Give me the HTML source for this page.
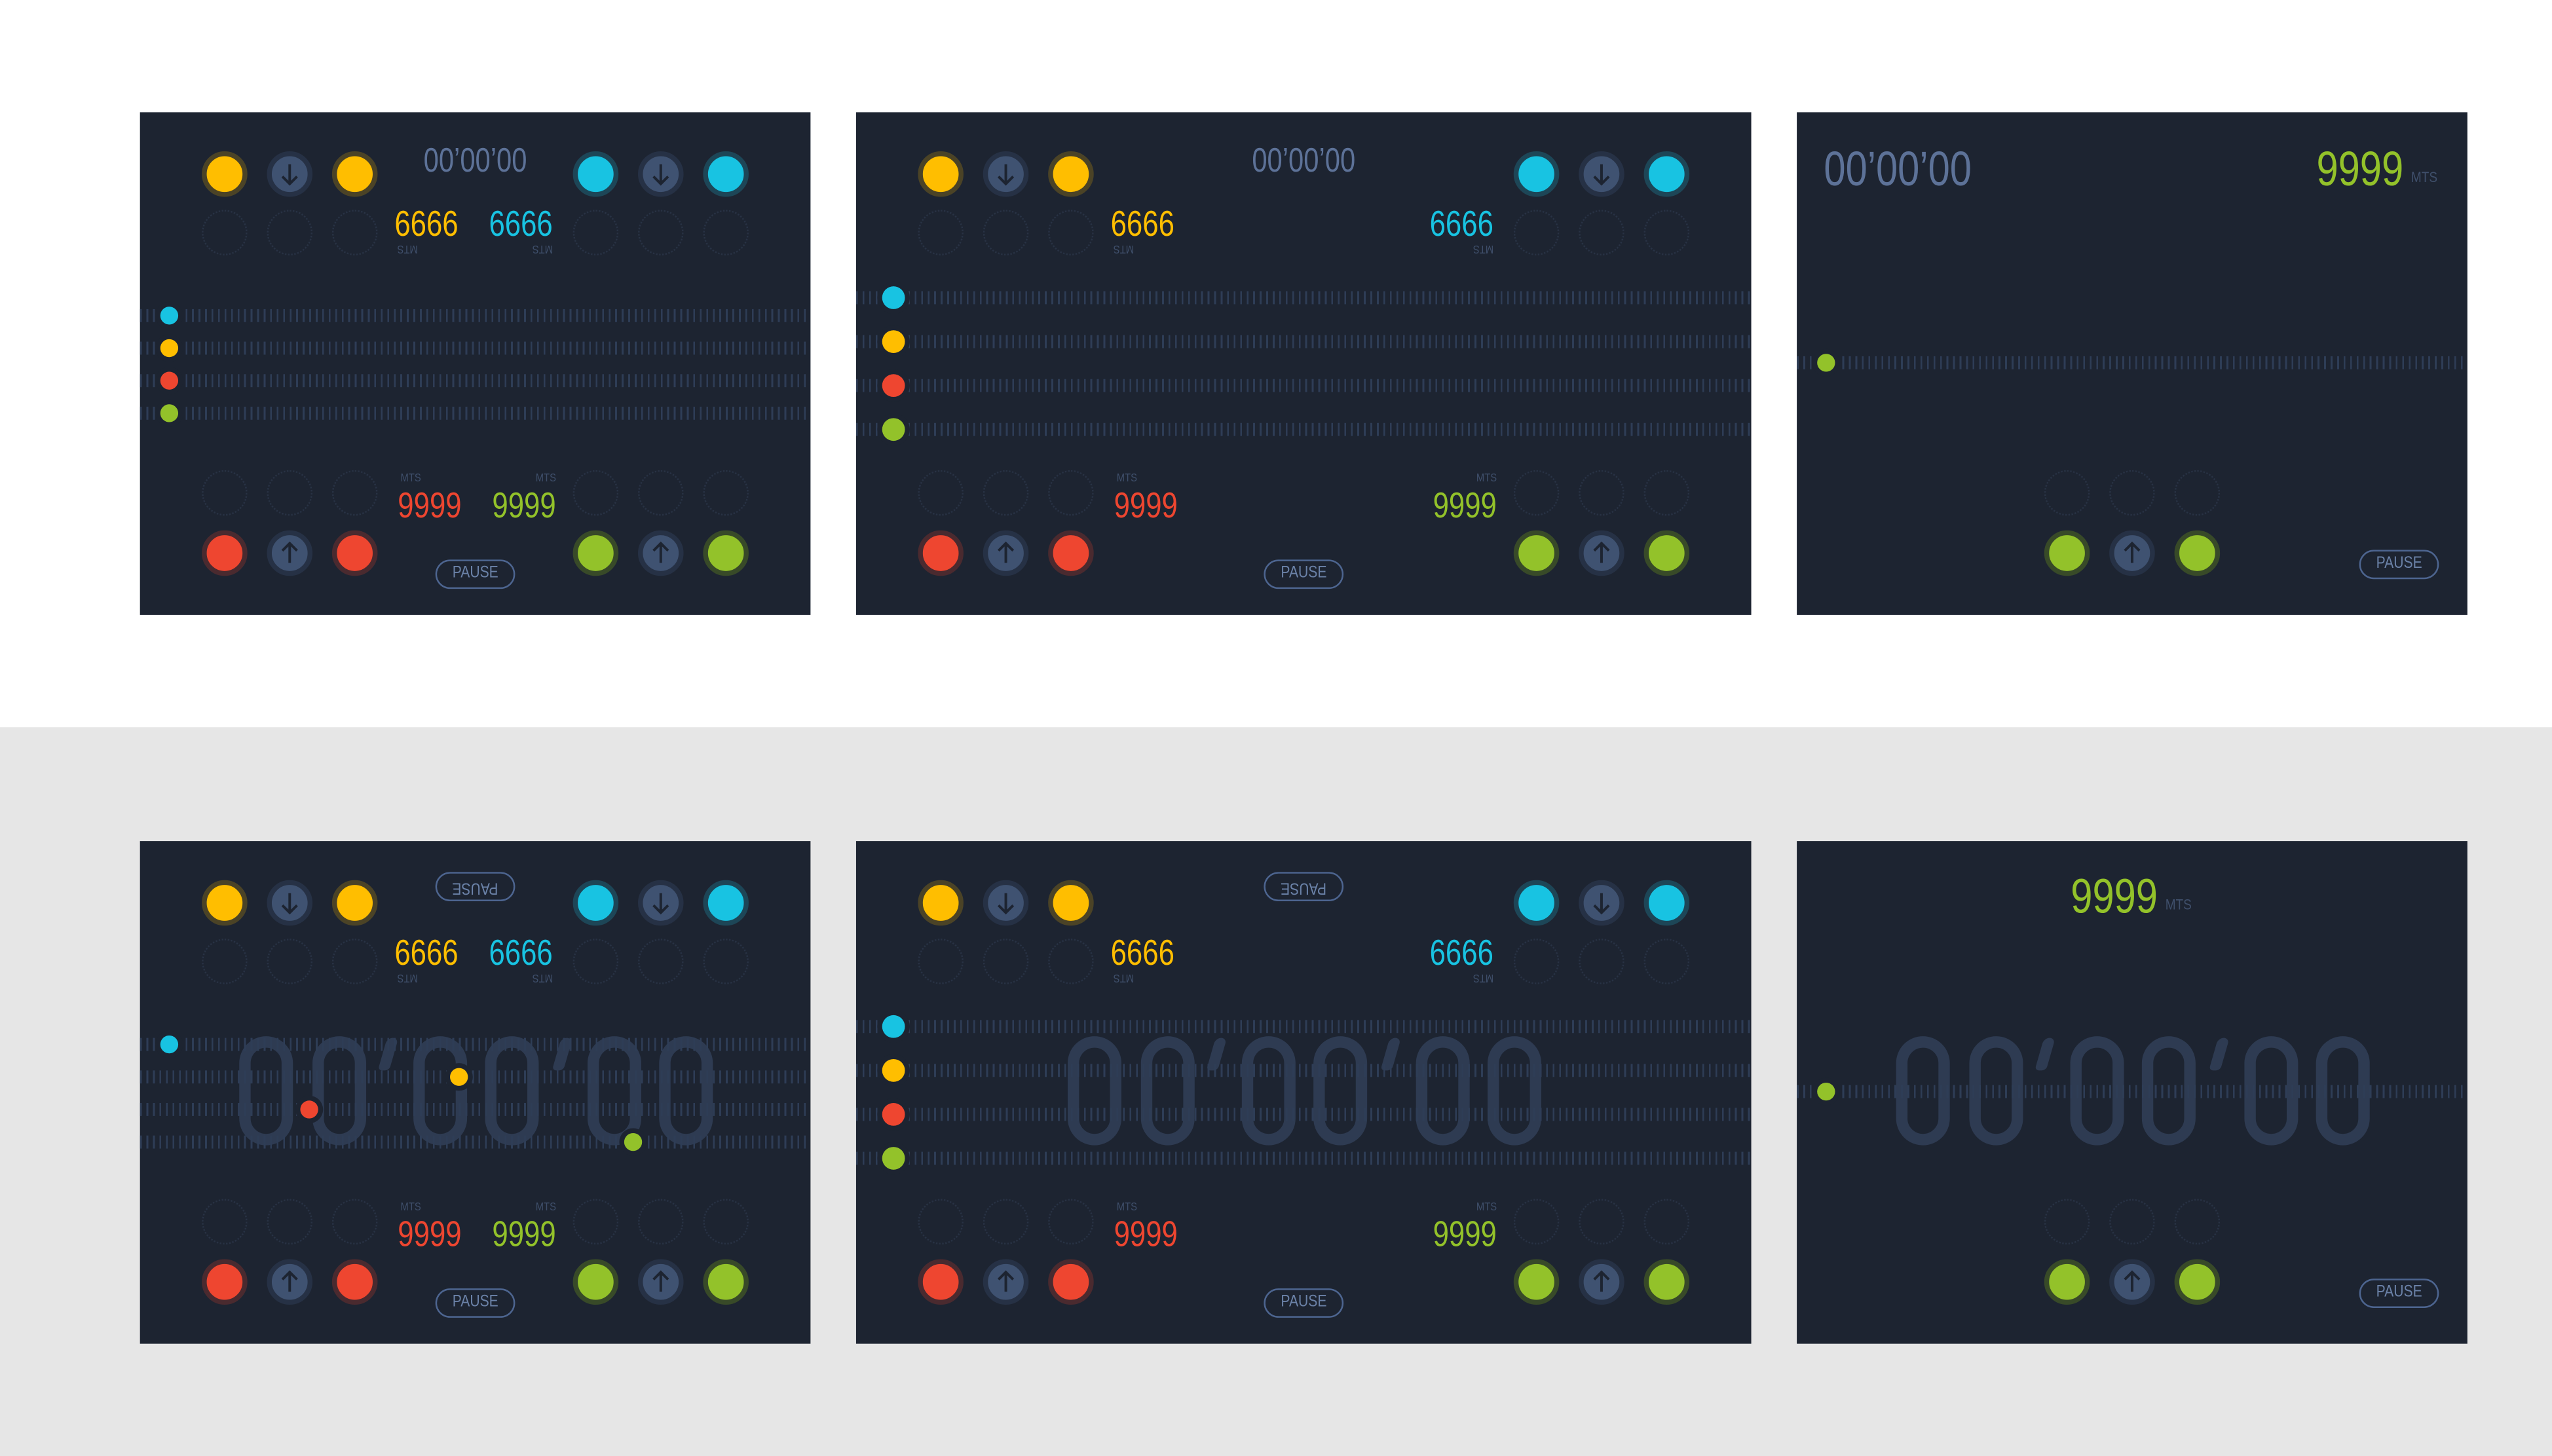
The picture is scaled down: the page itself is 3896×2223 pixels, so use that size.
<!DOCTYPE html>
<html><head><meta charset="utf-8"><style>
*{margin:0;padding:0;box-sizing:border-box}
html,body{width:3896px;height:2223px;overflow:hidden;background:#fff}
#w{position:absolute;left:0;top:0;width:1568px;height:895px;transform-origin:0 0;transform:scale(2.4847,2.4838);font-family:"Liberation Sans",sans-serif}
.gray{position:absolute;left:0;top:447px;width:1568px;height:448px;background:#e6e6e6}
.p{position:absolute;background:#1d2431;overflow:hidden}
.c{position:absolute;width:28px;height:28px;border-radius:50%;border:3px solid;transform:translate(-50%,-50%);margin-top:1px}
.y{background:#ffbe00;border-color:#4b4326}.cy{background:#18c3e2;border-color:#1d4657}
.r{background:#ee4630;border-color:#4a2a2f}.g{background:#93c22a;border-color:#384a28}
.gr{background:#3f5271;border-color:#263145}
.c svg{position:absolute;left:0;top:0}
.d{position:absolute;width:28px;height:28px;border-radius:50%;border:1px dotted #283244;transform:translate(-50%,-50%)}
.t{position:absolute;left:0;right:0;height:8px;margin-top:-4px;background:repeating-linear-gradient(90deg,#2e3d56 0 1.1px,transparent 1.1px 4px)}
.dot{position:absolute;border-radius:50%;transform:translate(-50%,-50%);box-shadow:0 0 0 3px #1d2431}
.tx{position:absolute;white-space:nowrap;line-height:1;transform:translate(-50%,-50%) scaleX(.8)}
.tm{color:#5d7298;font-size:21px}
.n{font-size:22px}
.ye{color:#ffbe00}.cye{color:#18c3e2}.re{color:#ee4630}.ge{color:#93c22a}
.m{position:absolute;font-size:7px;color:#3f4f6b;line-height:1;transform:scaleX(.85)}
.mu{transform:rotate(180deg) scaleX(.85)}
.pa{position:absolute;width:49px;height:18px;border:1px solid #4d6590;border-radius:9px;color:#6b82a8;font-size:10px;line-height:16px;text-align:center;transform:translate(-50%,-50%);margin-top:1.5px}
.pa span{display:inline-block;transform:scaleX(.85)}
.pu{transform:translate(-50%,-50%) rotate(180deg);margin-top:0}
.big{position:absolute;top:120px;width:300px;height:68px}
.z{position:absolute;top:0;width:33px;height:67px;border:7px solid #2e3b52;border-radius:17px}
.ap{position:absolute;top:1px;width:7px;height:20px;background:#2e3b52;border-radius:4px 4px 3px 3px;transform:skewX(-16deg)}
</style></head><body><div id="w">
<div class="gray"></div>

<!-- Row 1 Panel 1 -->
<div class="p" style="left:86px;top:69px;width:412px;height:309px">
<div class="c y" style="left:52px;top:37px"></div>
<div class="c gr" style="left:92px;top:37px"><svg width="22" height="22" viewBox="0 0 22 22"><path d="M11 5v12M6.5 12.5 11 17l4.5-4.5" stroke="#1d2431" stroke-width="1.6" fill="none"/></svg></div>
<div class="c y" style="left:132px;top:37px"></div>
<div class="c cy" style="left:280px;top:37px"></div>
<div class="c gr" style="left:320px;top:37px"><svg width="22" height="22" viewBox="0 0 22 22"><path d="M11 5v12M6.5 12.5 11 17l4.5-4.5" stroke="#1d2431" stroke-width="1.6" fill="none"/></svg></div>
<div class="c cy" style="left:360px;top:37px"></div>
<div class="tx tm" style="left:206px;top:30px">00’00’00</div>
<div class="d" style="left:52px;top:74px"></div><div class="d" style="left:92px;top:74px"></div><div class="d" style="left:132px;top:74px"></div>
<div class="d" style="left:280px;top:74px"></div><div class="d" style="left:320px;top:74px"></div><div class="d" style="left:360px;top:74px"></div>
<div class="tx n ye" style="left:176px;top:69px">6666</div>
<div class="tx n cye" style="left:234px;top:69px">6666</div>
<div class="m mu" style="left:157px;top:80px">MTS</div>
<div class="m mu" style="left:240px;top:80px">MTS</div>
<div class="t" style="top:125px"></div><div class="t" style="top:145px"></div><div class="t" style="top:165px"></div><div class="t" style="top:185px"></div>
<div class="dot" style="left:18px;top:125px;width:11px;height:11px;background:#18c3e2"></div>
<div class="dot" style="left:18px;top:145px;width:11px;height:11px;background:#ffbe00"></div>
<div class="dot" style="left:18px;top:165px;width:11px;height:11px;background:#ee4630"></div>
<div class="dot" style="left:18px;top:185px;width:11px;height:11px;background:#93c22a"></div>
<div class="d" style="left:52px;top:234px"></div><div class="d" style="left:92px;top:234px"></div><div class="d" style="left:132px;top:234px"></div>
<div class="d" style="left:280px;top:234px"></div><div class="d" style="left:320px;top:234px"></div><div class="d" style="left:360px;top:234px"></div>
<div class="m" style="left:159px;top:222px">MTS</div>
<div class="m" style="left:242px;top:222px">MTS</div>
<div class="tx n re" style="left:178px;top:242px">9999</div>
<div class="tx n ge" style="left:236px;top:242px">9999</div>
<div class="c r" style="left:52px;top:270px"></div>
<div class="c gr" style="left:92px;top:270px"><svg width="22" height="22" viewBox="0 0 22 22"><path d="M11 17V5M6.5 9.5 11 5l4.5 4.5" stroke="#1d2431" stroke-width="1.6" fill="none"/></svg></div>
<div class="c r" style="left:132px;top:270px"></div>
<div class="c g" style="left:280px;top:270px"></div>
<div class="c gr" style="left:320px;top:270px"><svg width="22" height="22" viewBox="0 0 22 22"><path d="M11 17V5M6.5 9.5 11 5l4.5 4.5" stroke="#1d2431" stroke-width="1.6" fill="none"/></svg></div>
<div class="c g" style="left:360px;top:270px"></div>
<div class="pa" style="left:206px;top:282px"><span>PAUSE</span></div>
</div>

<!-- Row 1 Panel 2 -->
<div class="p" style="left:526px;top:69px;width:550px;height:309px">
<div class="c y" style="left:52px;top:37px"></div>
<div class="c gr" style="left:92px;top:37px"><svg width="22" height="22" viewBox="0 0 22 22"><path d="M11 5v12M6.5 12.5 11 17l4.5-4.5" stroke="#1d2431" stroke-width="1.6" fill="none"/></svg></div>
<div class="c y" style="left:132px;top:37px"></div>
<div class="c cy" style="left:418px;top:37px"></div>
<div class="c gr" style="left:458px;top:37px"><svg width="22" height="22" viewBox="0 0 22 22"><path d="M11 5v12M6.5 12.5 11 17l4.5-4.5" stroke="#1d2431" stroke-width="1.6" fill="none"/></svg></div>
<div class="c cy" style="left:498px;top:37px"></div>
<div class="tx tm" style="left:275px;top:30px">00’00’00</div>
<div class="d" style="left:52px;top:74px"></div><div class="d" style="left:92px;top:74px"></div><div class="d" style="left:132px;top:74px"></div>
<div class="d" style="left:418px;top:74px"></div><div class="d" style="left:458px;top:74px"></div><div class="d" style="left:498px;top:74px"></div>
<div class="tx n ye" style="left:176px;top:69px">6666</div>
<div class="tx n cye" style="left:372px;top:69px">6666</div>
<div class="m mu" style="left:157px;top:80px">MTS</div>
<div class="m mu" style="left:378px;top:80px">MTS</div>
<div class="t" style="top:114px"></div><div class="t" style="top:141px"></div><div class="t" style="top:168px"></div><div class="t" style="top:195px"></div>
<div class="dot" style="left:23px;top:114px;width:14px;height:14px;background:#18c3e2"></div>
<div class="dot" style="left:23px;top:141px;width:14px;height:14px;background:#ffbe00"></div>
<div class="dot" style="left:23px;top:168px;width:14px;height:14px;background:#ee4630"></div>
<div class="dot" style="left:23px;top:195px;width:14px;height:14px;background:#93c22a"></div>
<div class="d" style="left:52px;top:234px"></div><div class="d" style="left:92px;top:234px"></div><div class="d" style="left:132px;top:234px"></div>
<div class="d" style="left:418px;top:234px"></div><div class="d" style="left:458px;top:234px"></div><div class="d" style="left:498px;top:234px"></div>
<div class="m" style="left:159px;top:222px">MTS</div>
<div class="m" style="left:380px;top:222px">MTS</div>
<div class="tx n re" style="left:178px;top:242px">9999</div>
<div class="tx n ge" style="left:374px;top:242px">9999</div>
<div class="c r" style="left:52px;top:270px"></div>
<div class="c gr" style="left:92px;top:270px"><svg width="22" height="22" viewBox="0 0 22 22"><path d="M11 17V5M6.5 9.5 11 5l4.5 4.5" stroke="#1d2431" stroke-width="1.6" fill="none"/></svg></div>
<div class="c r" style="left:132px;top:270px"></div>
<div class="c g" style="left:418px;top:270px"></div>
<div class="c gr" style="left:458px;top:270px"><svg width="22" height="22" viewBox="0 0 22 22"><path d="M11 17V5M6.5 9.5 11 5l4.5 4.5" stroke="#1d2431" stroke-width="1.6" fill="none"/></svg></div>
<div class="c g" style="left:498px;top:270px"></div>
<div class="pa" style="left:275px;top:282px"><span>PAUSE</span></div>
</div>

<!-- Row 1 Panel 3 -->
<div class="p" style="left:1104px;top:69px;width:412px;height:309px">
<div class="tx" style="left:62px;top:36px;color:#5d7298;font-size:30px">00’00’00</div>
<div class="tx ge" style="left:346px;top:36px;font-size:30px">9999</div>
<div class="m" style="left:376px;top:36px;font-size:9px">MTS</div>
<div class="t" style="top:154px"></div>
<div class="dot" style="left:18px;top:154px;width:11px;height:11px;background:#93c22a"></div>
<div class="d" style="left:166px;top:234px"></div><div class="d" style="left:206px;top:234px"></div><div class="d" style="left:246px;top:234px"></div>
<div class="c g" style="left:166px;top:270px"></div>
<div class="c gr" style="left:206px;top:270px"><svg width="22" height="22" viewBox="0 0 22 22"><path d="M11 17V5M6.5 9.5 11 5l4.5 4.5" stroke="#1d2431" stroke-width="1.6" fill="none"/></svg></div>
<div class="c g" style="left:246px;top:270px"></div>
<div class="pa" style="left:370px;top:276px"><span>PAUSE</span></div>
</div>

<!-- Row 2 Panel 1 -->
<div class="p" style="left:86px;top:517px;width:412px;height:309px">
<div class="c y" style="left:52px;top:37px"></div>
<div class="c gr" style="left:92px;top:37px"><svg width="22" height="22" viewBox="0 0 22 22"><path d="M11 5v12M6.5 12.5 11 17l4.5-4.5" stroke="#1d2431" stroke-width="1.6" fill="none"/></svg></div>
<div class="c y" style="left:132px;top:37px"></div>
<div class="c cy" style="left:280px;top:37px"></div>
<div class="c gr" style="left:320px;top:37px"><svg width="22" height="22" viewBox="0 0 22 22"><path d="M11 5v12M6.5 12.5 11 17l4.5-4.5" stroke="#1d2431" stroke-width="1.6" fill="none"/></svg></div>
<div class="c cy" style="left:360px;top:37px"></div>
<div class="pa pu" style="left:206px;top:28px"><span>PAUSE</span></div>
<div class="d" style="left:52px;top:74px"></div><div class="d" style="left:92px;top:74px"></div><div class="d" style="left:132px;top:74px"></div>
<div class="d" style="left:280px;top:74px"></div><div class="d" style="left:320px;top:74px"></div><div class="d" style="left:360px;top:74px"></div>
<div class="tx n ye" style="left:176px;top:69px">6666</div>
<div class="tx n cye" style="left:234px;top:69px">6666</div>
<div class="m mu" style="left:157px;top:80px">MTS</div>
<div class="m mu" style="left:240px;top:80px">MTS</div>
<div class="big" style="left:61px"><div class="z" style="left:0"></div><div class="z" style="left:44.5px"></div><div class="ap" style="left:88px"></div><div class="z" style="left:106.8px"></div><div class="z" style="left:151.2px"></div><div class="ap" style="left:195px"></div><div class="z" style="left:213.5px"></div><div class="z" style="left:258px"></div></div>
<div class="t" style="top:125px"></div><div class="t" style="top:145px"></div><div class="t" style="top:165px"></div><div class="t" style="top:185px"></div>
<div class="dot" style="left:18px;top:125px;width:11px;height:11px;background:#18c3e2"></div>
<div class="dot" style="left:196px;top:145px;width:11px;height:11px;background:#ffbe00"></div>
<div class="dot" style="left:104px;top:165px;width:11px;height:11px;background:#ee4630"></div>
<div class="dot" style="left:303px;top:185px;width:11px;height:11px;background:#93c22a"></div>
<div class="d" style="left:52px;top:234px"></div><div class="d" style="left:92px;top:234px"></div><div class="d" style="left:132px;top:234px"></div>
<div class="d" style="left:280px;top:234px"></div><div class="d" style="left:320px;top:234px"></div><div class="d" style="left:360px;top:234px"></div>
<div class="m" style="left:159px;top:222px">MTS</div>
<div class="m" style="left:242px;top:222px">MTS</div>
<div class="tx n re" style="left:178px;top:242px">9999</div>
<div class="tx n ge" style="left:236px;top:242px">9999</div>
<div class="c r" style="left:52px;top:270px"></div>
<div class="c gr" style="left:92px;top:270px"><svg width="22" height="22" viewBox="0 0 22 22"><path d="M11 17V5M6.5 9.5 11 5l4.5 4.5" stroke="#1d2431" stroke-width="1.6" fill="none"/></svg></div>
<div class="c r" style="left:132px;top:270px"></div>
<div class="c g" style="left:280px;top:270px"></div>
<div class="c gr" style="left:320px;top:270px"><svg width="22" height="22" viewBox="0 0 22 22"><path d="M11 17V5M6.5 9.5 11 5l4.5 4.5" stroke="#1d2431" stroke-width="1.6" fill="none"/></svg></div>
<div class="c g" style="left:360px;top:270px"></div>
<div class="pa" style="left:206px;top:282px"><span>PAUSE</span></div>
</div>

<!-- Row 2 Panel 2 -->
<div class="p" style="left:526px;top:517px;width:550px;height:309px">
<div class="c y" style="left:52px;top:37px"></div>
<div class="c gr" style="left:92px;top:37px"><svg width="22" height="22" viewBox="0 0 22 22"><path d="M11 5v12M6.5 12.5 11 17l4.5-4.5" stroke="#1d2431" stroke-width="1.6" fill="none"/></svg></div>
<div class="c y" style="left:132px;top:37px"></div>
<div class="c cy" style="left:418px;top:37px"></div>
<div class="c gr" style="left:458px;top:37px"><svg width="22" height="22" viewBox="0 0 22 22"><path d="M11 5v12M6.5 12.5 11 17l4.5-4.5" stroke="#1d2431" stroke-width="1.6" fill="none"/></svg></div>
<div class="c cy" style="left:498px;top:37px"></div>
<div class="pa pu" style="left:275px;top:28px"><span>PAUSE</span></div>
<div class="d" style="left:52px;top:74px"></div><div class="d" style="left:92px;top:74px"></div><div class="d" style="left:132px;top:74px"></div>
<div class="d" style="left:418px;top:74px"></div><div class="d" style="left:458px;top:74px"></div><div class="d" style="left:498px;top:74px"></div>
<div class="tx n ye" style="left:176px;top:69px">6666</div>
<div class="tx n cye" style="left:372px;top:69px">6666</div>
<div class="m mu" style="left:157px;top:80px">MTS</div>
<div class="m mu" style="left:378px;top:80px">MTS</div>
<div class="big" style="left:130px"><div class="z" style="left:0"></div><div class="z" style="left:44.5px"></div><div class="ap" style="left:88px"></div><div class="z" style="left:106.8px"></div><div class="z" style="left:151.2px"></div><div class="ap" style="left:195px"></div><div class="z" style="left:213.5px"></div><div class="z" style="left:258px"></div></div>
<div class="t" style="top:114px"></div><div class="t" style="top:141px"></div><div class="t" style="top:168px"></div><div class="t" style="top:195px"></div>
<div class="dot" style="left:23px;top:114px;width:14px;height:14px;background:#18c3e2"></div>
<div class="dot" style="left:23px;top:141px;width:14px;height:14px;background:#ffbe00"></div>
<div class="dot" style="left:23px;top:168px;width:14px;height:14px;background:#ee4630"></div>
<div class="dot" style="left:23px;top:195px;width:14px;height:14px;background:#93c22a"></div>
<div class="d" style="left:52px;top:234px"></div><div class="d" style="left:92px;top:234px"></div><div class="d" style="left:132px;top:234px"></div>
<div class="d" style="left:418px;top:234px"></div><div class="d" style="left:458px;top:234px"></div><div class="d" style="left:498px;top:234px"></div>
<div class="m" style="left:159px;top:222px">MTS</div>
<div class="m" style="left:380px;top:222px">MTS</div>
<div class="tx n re" style="left:178px;top:242px">9999</div>
<div class="tx n ge" style="left:374px;top:242px">9999</div>
<div class="c r" style="left:52px;top:270px"></div>
<div class="c gr" style="left:92px;top:270px"><svg width="22" height="22" viewBox="0 0 22 22"><path d="M11 17V5M6.5 9.5 11 5l4.5 4.5" stroke="#1d2431" stroke-width="1.6" fill="none"/></svg></div>
<div class="c r" style="left:132px;top:270px"></div>
<div class="c g" style="left:418px;top:270px"></div>
<div class="c gr" style="left:458px;top:270px"><svg width="22" height="22" viewBox="0 0 22 22"><path d="M11 17V5M6.5 9.5 11 5l4.5 4.5" stroke="#1d2431" stroke-width="1.6" fill="none"/></svg></div>
<div class="c g" style="left:498px;top:270px"></div>
<div class="pa" style="left:275px;top:282px"><span>PAUSE</span></div>
</div>

<!-- Row 2 Panel 3 -->
<div class="p" style="left:1104px;top:517px;width:412px;height:309px">
<div class="tx ge" style="left:195px;top:35px;font-size:30px">9999</div>
<div class="m" style="left:225px;top:35px;font-size:9px">MTS</div>
<div class="big" style="left:61px"><div class="z" style="left:0"></div><div class="z" style="left:44.5px"></div><div class="ap" style="left:88px"></div><div class="z" style="left:106.8px"></div><div class="z" style="left:151.2px"></div><div class="ap" style="left:195px"></div><div class="z" style="left:213.5px"></div><div class="z" style="left:258px"></div></div>
<div class="t" style="top:154px"></div>
<div class="dot" style="left:18px;top:154px;width:11px;height:11px;background:#93c22a"></div>
<div class="d" style="left:166px;top:234px"></div><div class="d" style="left:206px;top:234px"></div><div class="d" style="left:246px;top:234px"></div>
<div class="c g" style="left:166px;top:270px"></div>
<div class="c gr" style="left:206px;top:270px"><svg width="22" height="22" viewBox="0 0 22 22"><path d="M11 17V5M6.5 9.5 11 5l4.5 4.5" stroke="#1d2431" stroke-width="1.6" fill="none"/></svg></div>
<div class="c g" style="left:246px;top:270px"></div>
<div class="pa" style="left:370px;top:276px"><span>PAUSE</span></div>
</div>

</div></body></html>
